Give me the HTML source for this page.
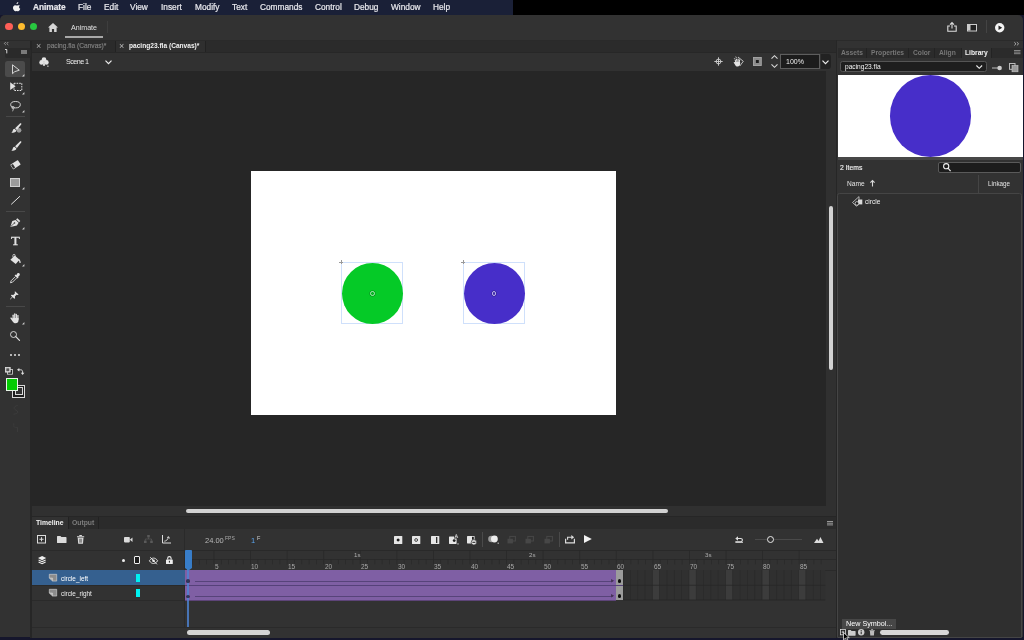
<!DOCTYPE html>
<html><head><meta charset="utf-8"><title>Animate</title>
<style>
*{box-sizing:border-box;margin:0;padding:0}
html,body{width:1024px;height:640px;overflow:hidden;background:#15162c;font-family:"Liberation Sans",sans-serif;color:#ddd}
.a{position:absolute}
.t,.m,.r{will-change:transform}
.t{position:absolute;white-space:nowrap;line-height:10px;font-size:7.5px;color:#d8d8d8}
.m{position:absolute;white-space:nowrap;line-height:14px;top:0;font-size:8.3px;color:#e9e9ee;-webkit-text-stroke:.2px #e9e9ee}
svg{position:absolute;overflow:visible}
.b{font-weight:700}
.r{position:absolute;white-space:nowrap;line-height:8px;font-size:6.5px;color:#a8a8a8}
</style></head><body>
<div class="a" style="left:0px;top:0px;width:1024px;height:15px;background:#000;"></div>
<div class="a" style="left:0px;top:0px;width:513px;height:15px;background:#1a2037;"></div>
<svg style="left:12px;top:2px" width="9" height="10" viewBox="0 0 18 20"><path fill="#f2f2f2" d="M12.6 0c.1 1.100-.3 2.100-1 2.900-.7.800-1.700 1.400-2.700 1.300-.100-1 .4-2.100 1-2.800C10.600.6 11.700.1 12.600 0zM16 6.800c-1.200.700-1.900 1.900-1.900 3.300 0 1.600.9 3 2.400 3.600-.3.900-.700 1.700-1.200 2.500-.800 1.100-1.600 2.300-2.800 2.300s-1.600-.700-3-.700-1.900.700-3 .800c-1.200 0-2.100-1.200-2.900-2.400C2 13.900 1.300 10.500 2.900 8.400c.800-1.300 2.200-2.100 3.600-2.100 1.300 0 2.300.8 3 .8.700 0 2-.9 3.500-.8 1.200 0 2.300.6 3 1.500z"/></svg>
<div class="m b" style="left:33px">Animate</div>
<div class="m" style="left:78px">File</div>
<div class="m" style="left:103.5px">Edit</div>
<div class="m" style="left:130px">View</div>
<div class="m" style="left:160.5px">Insert</div>
<div class="m" style="left:194.5px">Modify</div>
<div class="m" style="left:232px">Text</div>
<div class="m" style="left:260px">Commands</div>
<div class="m" style="left:314.5px">Control</div>
<div class="m" style="left:354px">Debug</div>
<div class="m" style="left:390.5px">Window</div>
<div class="m" style="left:432.5px">Help</div>
<div class="a" style="left:0px;top:14.7px;width:1022.7px;height:622.8px;background:#323232;border-radius:5px 5px 0 0"></div>
<div class="a" style="left:5.3999999999999995px;top:22.5px;width:7.6px;height:7.6px;background:#fe5f57;border-radius:50%"></div>
<div class="a" style="left:17.599999999999998px;top:22.5px;width:7.6px;height:7.6px;background:#febc2e;border-radius:50%"></div>
<div class="a" style="left:29.8px;top:22.5px;width:7.6px;height:7.6px;background:#28c840;border-radius:50%"></div>
<svg style="left:48px;top:23px" width="10" height="9" viewBox="0 0 20 18"><path fill="#d6d6d6" d="M10 0L0 9h2.800v9h5v-6h4.400v6h5V9H20z"/></svg>
<div class="t" style="left:71.2px;top:22.9px;font-size:7.1px;color:#e0e0e0">Animate</div>
<div class="a" style="left:65px;top:36.3px;width:38px;height:1.5px;background:#a8a8a8;"></div>
<div class="a" style="left:107px;top:21px;width:1px;height:12px;background:#3e3e3e;"></div>
<svg style="left:947px;top:22px" width="10" height="10" viewBox="0 0 10 10"><path fill="none" stroke="#ddd" stroke-width="1.100" d="M3 4H.8v5.300h8.400V4H7M5 6.500V.8M3 2.600l2-2 2 2"/></svg>
<svg style="left:967px;top:24px" width="10" height="8" viewBox="0 0 10 8"><rect x=".5" y=".5" width="9" height="6.500" fill="#222" stroke="#ccc" stroke-width="1"/><rect x="1" y="1" width="2.500" height="5.500" fill="#ccc"/></svg>
<div class="a" style="left:985.5px;top:19.5px;width:1px;height:13.5px;background:#444;"></div>
<svg style="left:995px;top:22.600px" width="9.400" height="9.400" viewBox="0 0 10 10"><circle cx="5" cy="5" r="5" fill="#f4f4f4"/><path d="M3.700 2.600v4.800L7.600 5z" fill="#222"/></svg>
<div class="a" style="left:31.5px;top:40px;width:805px;height:12.5px;background:#2b2b2b;"></div>
<div class="a" style="left:115px;top:40px;width:90px;height:12.5px;background:#2f2f2f;"></div>
<div class="a" style="left:115px;top:40px;width:0.7px;height:12.5px;background:#222;"></div>
<div class="a" style="left:205px;top:40px;width:0.7px;height:12.5px;background:#222;"></div>
<div class="t" style="left:35.5px;top:41.3px;font-size:9px;color:#aaa">×</div>
<div class="t" style="left:46.5px;top:41.1px;font-size:6.6px;color:#808080;-webkit-text-stroke:.15px #808080">pacing.fla (Canvas)*</div>
<div class="t" style="left:119px;top:41.3px;font-size:9px;color:#bbb">×</div>
<div class="t" style="left:129.2px;top:41.1px;font-size:6.6px;color:#f2f2f2;font-weight:700">pacing23.fla (Canvas)*</div>
<div class="a" style="left:31.5px;top:52.5px;width:805px;height:18px;background:#313131;"></div>
<div class="a" style="left:31.5px;top:70.5px;width:794.5px;height:435.5px;background:#262626;"></div>
<div class="a" style="left:825.8px;top:70.5px;width:10px;height:446px;background:#303030;"></div>
<div class="a" style="left:31.5px;top:505.7px;width:805px;height:10.5px;background:#303030;"></div>
<div class="a" style="left:250.5px;top:171.3px;width:365.7px;height:243.7px;background:#fff;"></div>
<svg style="left:38.900px;top:56.600px" width="10" height="10" viewBox="0 0 10 10"><g fill="#e4e4e4"><circle cx="5" cy="2.600" r="2.300"/><circle cx="2.600" cy="5.400" r="2.300"/><circle cx="7.400" cy="5.400" r="2.300"/><path d="M4.500 5h1l.6 3.800H3.900z"/><rect x="8.300" y="8.600" width="1.200" height="1.200"/></g></svg>
<div class="t" style="left:66px;top:56.5px;font-size:7.2px;color:#eee;letter-spacing:-.55px">Scene 1</div>
<svg style="left:105px;top:59.500px" width="7" height="4.500" viewBox="0 0 7 4.500"><path d="M.5.600l3 3 3-3" fill="none" stroke="#eee" stroke-width="1.200"/></svg>
<svg style="left:714px;top:57px" width="9" height="9" viewBox="0 0 9 9"><g fill="none" stroke="#d0d0d0" stroke-width=".9"><circle cx="4.500" cy="4.500" r="2.400"/><path d="M4.500 .3v8.400M.3 4.500h8.400"/></g></svg>
<svg style="left:732.500px;top:56px" width="11" height="11" viewBox="0 0 11 11"><path d="M5 1l5.300 4.300L6.800 10" fill="none" stroke="#cfcfcf" stroke-width=".9"/><path d="M2.200.8l2 .9M.9 2.500l1.500.3" stroke="#cfcfcf" stroke-width=".7"/><g fill="#e2e2e2"><rect x="2.100" y="3.500" width="1.100" height="4" rx=".55" transform="rotate(-18 2.600 5.500)"/><rect x="3.300" y="2.600" width="1.100" height="4.500" rx=".55" transform="rotate(-10 3.800 5)"/><rect x="4.600" y="2.500" width="1.100" height="4.500" rx=".55"/><rect x="5.900" y="3.200" width="1.100" height="4" rx=".55" transform="rotate(10 6.400 5)"/><path d="M2.300 6h4.800v2c0 1.500-1 2.500-2.500 2.500-1.100 0-1.900-.5-2.400-1.500L.8 6.800c-.4-.7.500-1.300 1-.6z"/></g></svg>
<svg style="left:753.300px;top:57px" width="8.700" height="9" viewBox="0 0 8.700 9"><rect x="0" y="0" width="8.700" height="9" rx=".5" fill="#8c8c8c"/><rect x=".5" y=".5" width="7.700" height="8" fill="none" stroke="#a6a6a6" stroke-width=".8"/><rect x="2.900" y="3" width="2.900" height="3" fill="#1e1e1e"/></svg>
<svg style="left:771.300px;top:55px" width="7" height="13" viewBox="0 0 7 13"><path d="M.5 3.700l3-3 3 3M.5 9.300l3 3 3-3" fill="none" stroke="#d8d8d8" stroke-width="1.100"/></svg>
<div class="a" style="left:780.2px;top:54.3px;width:40.3px;height:14.3px;background:#1c1c1c;border:1px solid #5e5e5e"></div>
<div class="t" style="left:786px;top:57px;font-size:7px;color:#eee">100%</div>
<div class="a" style="left:820.5px;top:54px;width:10.5px;height:15px;background:#222;border-radius:0 3px 3px 0"></div>
<svg style="left:822px;top:59.500px" width="7" height="4.500" viewBox="0 0 7 4.500"><path d="M.5.600l3 3 3-3" fill="none" stroke="#eee" stroke-width="1.200"/></svg>
<div class="a" style="left:341.2px;top:262.04999999999995px;width:62px;height:62px;background:transparent;border:1px solid #cfe0fb"></div>
<div class="a" style="left:341.7px;top:262.54999999999995px;width:61.2px;height:61.2px;background:#05ca27;border-radius:50%"></div>
<div class="a" style="left:369.90000000000003px;top:290.75px;width:4.8px;height:4.8px;background:transparent;border-radius:50%;border:.9px solid rgba(255,255,255,.62);box-shadow:0 0 0 .5px rgba(0,0,0,.35),inset 0 0 0 .5px rgba(0,0,0,.3)"></div>
<div class="a" style="left:339.2px;top:262.24999999999994px;width:4px;height:0.6px;background:#999;"></div>
<div class="a" style="left:340.9px;top:260.04999999999995px;width:0.6px;height:4px;background:#999;"></div>
<div class="a" style="left:463.0px;top:262.04999999999995px;width:62px;height:62px;background:transparent;border:1px solid #cfe0fb"></div>
<div class="a" style="left:463.5px;top:262.54999999999995px;width:61.2px;height:61.2px;background:#472ec9;border-radius:50%"></div>
<div class="a" style="left:491.70000000000005px;top:290.75px;width:4.8px;height:4.8px;background:transparent;border-radius:50%;border:.9px solid rgba(255,255,255,.62);box-shadow:0 0 0 .5px rgba(0,0,0,.35),inset 0 0 0 .5px rgba(0,0,0,.3)"></div>
<div class="a" style="left:461.0px;top:262.24999999999994px;width:4px;height:0.6px;background:#999;"></div>
<div class="a" style="left:462.7px;top:260.04999999999995px;width:0.6px;height:4px;background:#999;"></div>
<div class="a" style="left:829.4px;top:205.6px;width:3.7px;height:164px;background:#d2d2d2;border-radius:2px"></div>
<div class="a" style="left:186px;top:509.3px;width:481.8px;height:4.2px;background:#d2d2d2;border-radius:2px"></div>
<div class="a" style="left:30px;top:39.7px;width:1.7px;height:598px;background:#262626;"></div>
<div class="a" style="left:0px;top:39.6px;width:1023px;height:1px;background:#2a2a2a;"></div>
<div class="a" style="left:31.7px;top:51.8px;width:804px;height:0.8px;background:#272727;"></div>
<div class="a" style="left:835.8px;top:40px;width:1.7px;height:598px;background:#262626;"></div>
<div class="a" style="left:31.5px;top:516px;width:804.5px;height:1.4px;background:#262626;"></div>
<div class="a" style="left:31.5px;top:517px;width:804.5px;height:121px;background:#323232;"></div>
<div class="a" style="left:31.5px;top:517.4px;width:804.5px;height:11.3px;background:#2b2b2b;"></div>
<div class="a" style="left:31.5px;top:517.4px;width:37px;height:11.3px;background:#323232;"></div>
<div class="a" style="left:68.4px;top:517.4px;width:0.7px;height:11.3px;background:#222;"></div>
<div class="a" style="left:98.4px;top:517.4px;width:0.7px;height:11.3px;background:#222;"></div>
<div class="t" style="left:36.1px;top:517.7px;font-size:6.800px;font-weight:700;color:#f4f4f4">Timeline</div>
<div class="t" style="left:72px;top:517.7px;font-size:6.800px;font-weight:700;color:#7c7c7c">Output</div>
<svg style="left:826.800px;top:520.500px" width="6" height="4.500" viewBox="0 0 6 4.500"><path d="M0 .5h6M0 2.200h6M0 3.900h6" stroke="#999" stroke-width="1"/></svg>
<div class="a" style="left:31.5px;top:549.6px;width:804.5px;height:0.7px;background:#2a2a2a;"></div>
<div class="a" style="left:184.2px;top:529px;width:0.7px;height:98px;background:#2a2a2a;"></div>
<svg style="left:37.200px;top:535px" width="9" height="8.500" viewBox="0 0 9 8.500"><rect x=".5" y=".5" width="8" height="7.500" fill="none" stroke="#dcdcdc" stroke-width="1"/><path d="M4.500 2.200v4.100M2.400 4.250h4.200" stroke="#dcdcdc" stroke-width="1"/></svg>
<svg style="left:57px;top:535.800px" width="9.500" height="7" viewBox="0 0 9.500 7"><path d="M0 .6C0 .3.300 0 .6 0h2.800l1 1.100h4.500c.3 0 .6.300.6.600V6.400c0 .3-.3.600-.6.600H.6C.3 7 0 6.700 0 6.400z" fill="#dcdcdc"/></svg>
<svg style="left:77.200px;top:534.800px" width="7.200" height="8.700" viewBox="0 0 7.200 8.700"><path d="M0 1.200h7.200v1H0zM2.300 0h2.600v1H2.300zM.7 2.700h5.800L6 8.700H1.200z" fill="#dcdcdc"/><path d="M2.600 3.700v4M3.600 3.700v4M4.600 3.700v4" stroke="#323232" stroke-width=".5"/></svg>
<svg style="left:124px;top:536.800px" width="8.500" height="5.400" viewBox="0 0 8.500 5.400"><rect x="0" y="0" width="5.800" height="5.400" rx=".8" fill="#dcdcdc"/><path d="M5.800 2.700L8.500.5v4.400z" fill="#dcdcdc"/></svg>
<svg style="left:143.600px;top:535px" width="9" height="8.500" viewBox="0 0 9 8.500"><g fill="#5a5a5a"><rect x="3.200" y="0" width="2.600" height="2.400"/><rect x="0" y="5.600" width="2.600" height="2.400"/><rect x="6.200" y="5.600" width="2.600" height="2.400"/><path d="M4.500 2.400v1.600M1.300 5.600V4h6.200v1.600" stroke="#5a5a5a" fill="none" stroke-width=".7"/></g></svg>
<svg style="left:162.400px;top:535px" width="9" height="8.500" viewBox="0 0 9 8.500"><path d="M.5 0v8h8.500" fill="none" stroke="#dcdcdc" stroke-width="1"/><path d="M2.300 6.200C4.500 6 5.800 4.500 6.500 2.200M5 2.600l1.700-.9.700 1.800" fill="none" stroke="#dcdcdc" stroke-width=".9"/></svg>
<div class="t" style="left:205.4px;top:536.2px;font-size:7.5px;color:#b8b8b8">24.00</div>
<div class="t" style="left:225.2px;top:533px;font-size:5px;color:#aaa">FPS</div>
<div class="t" style="left:250.5px;top:536.2px;font-size:7.5px;color:#5aa4ee">1</div>
<div class="t" style="left:256.8px;top:533px;font-size:5.5px;color:#ccc">F</div>
<svg style="left:394px;top:535.600px" width="8.300" height="8" viewBox="0 0 8.300 8"><rect x="0" y="0" width="8.300" height="8" rx=".6" fill="#e6e6e6"/><circle cx="4.150" cy="4" r="1.500" fill="#1c1c1c"/></svg>
<svg style="left:412px;top:535.600px" width="8.300" height="8" viewBox="0 0 8.300 8"><rect x="0" y="0" width="8.300" height="8" rx=".6" fill="#e6e6e6"/><circle cx="4.150" cy="4" r="1.400" fill="none" stroke="#1c1c1c" stroke-width=".8"/></svg>
<svg style="left:430.8px;top:535.600px" width="8.300" height="8" viewBox="0 0 8.300 8"><rect x="0" y="0" width="8.300" height="8" rx=".6" fill="#e6e6e6"/><rect x="5.100" y="1" width="1.200" height="6" fill="#1c1c1c"/></svg>
<svg style="left:449px;top:533.500px" width="10" height="10.500" viewBox="0 0 10 10.500"><rect x="0" y="2.500" width="7.600" height="7.400" rx=".6" fill="#e6e6e6"/><circle cx="5.200" cy="6.600" r="1.400" fill="#1c1c1c"/><rect x="5" y="0" width="4.500" height="4.500" fill="#323232"/><path d="M5.800 4l1.500-3.600L8.800 4M6.300 2.800h2" stroke="#e6e6e6" stroke-width=".7" fill="none"/><rect x="8.400" y="9.300" width="1.200" height="1.200" fill="#ccc"/></svg>
<svg style="left:467.200px;top:535.600px" width="10" height="9" viewBox="0 0 10 9"><rect x="0" y="0" width="7.600" height="7.400" rx=".6" fill="#e6e6e6"/><rect x="5" y=".8" width="1.800" height="3" fill="#1c1c1c"/><circle cx="6.900" cy="6.300" r="2.700" fill="#e6e6e6" stroke="#323232" stroke-width=".7"/><path d="M5.400 6.300h3" stroke="#1c1c1c" stroke-width="1"/></svg>
<div class="a" style="left:482.2px;top:532px;width:0.8px;height:14.5px;background:#4a4a4a;"></div>
<svg style="left:487.800px;top:535px" width="11" height="9" viewBox="0 0 11 9"><circle cx="3.400" cy="4" r="3.200" fill="#9a9a9a"/><circle cx="6.400" cy="4" r="3.400" fill="#ececec"/><rect x="9.600" y="7.600" width="1.200" height="1.200" fill="#ccc"/></svg>
<svg style="left:507px;top:535.600px" width="9" height="8" viewBox="0 0 9 8"><rect x="2.800" y=".4" width="5.600" height="4.600" fill="none" stroke="#474747" stroke-width="1"/><rect x=".5" y="2.800" width="5.400" height="4.600" fill="#474747"/></svg>
<svg style="left:525px;top:535.600px" width="9" height="8" viewBox="0 0 9 8"><rect x="2.800" y=".4" width="5.600" height="4.600" fill="none" stroke="#474747" stroke-width="1"/><rect x=".5" y="2.800" width="5.400" height="4.600" fill="#474747"/></svg>
<svg style="left:544px;top:535.600px" width="9" height="8" viewBox="0 0 9 8"><rect x="2.800" y=".4" width="5.600" height="4.600" fill="none" stroke="#474747" stroke-width="1"/><rect x=".5" y="2.800" width="5.400" height="4.600" fill="#474747"/></svg>
<div class="a" style="left:558.6px;top:532px;width:0.8px;height:14.5px;background:#4a4a4a;"></div>
<svg style="left:565px;top:535px" width="10" height="8.500" viewBox="0 0 10 8.500"><path d="M.6 3.800v4h8.800v-4" fill="none" stroke="#dcdcdc" stroke-width="1.200"/><path d="M2.600 4.800V2.300h4.200" fill="none" stroke="#dcdcdc" stroke-width="1.100"/><path d="M6.300 0l2.800 2.300-2.800 2.300z" fill="#dcdcdc"/></svg>
<svg style="left:584.400px;top:535.300px" width="7.800" height="8" viewBox="0 0 7.800 8"><path d="M0 0l7.800 4L0 8z" fill="#f2f2f2"/></svg>
<svg style="left:735.300px;top:536.300px" width="8.500" height="6.800" viewBox="0 0 8.500 6.800"><path d="M2.400 2.500h3.400a1.600 1.600 0 010 3.200H.4" fill="none" stroke="#dcdcdc" stroke-width="1.100"/><path d="M3 .2L.3 2.500 3 4.800z" fill="#dcdcdc"/><path d="M.4 6.300h7.600" stroke="#dcdcdc" stroke-width="1"/></svg>
<div class="a" style="left:755.4px;top:539.3px;width:47px;height:0.7px;background:#4a4a4a;"></div>
<div class="a" style="left:767.3px;top:536.0px;width:7.2px;height:7.2px;background:#323232;border-radius:50%;border:1.200px solid #e8e8e8"></div>
<svg style="left:814px;top:537px" width="9.500" height="6" viewBox="0 0 9.500 6"><path d="M0 6L3 1.800 4.600 4 6.400 0l3.100 6z" fill="#dcdcdc"/></svg>
<svg style="left:38.200px;top:556.300px" width="8.200" height="8.600" viewBox="0 0 8.200 8.600"><path d="M4.100 0l4.100 2.100-4.100 2.100L0 2.100z" fill="#eee"/><path d="M.6 3.900l3.500 1.800 3.500-1.800M.6 5.900l3.500 1.800 3.500-1.800" fill="none" stroke="#eee" stroke-width="1.100"/></svg>
<div class="a" style="left:122px;top:558.7px;width:3px;height:3px;background:#eee;border-radius:50%"></div>
<div class="a" style="left:134.4px;top:556.3px;width:5.8px;height:8px;background:#1e1e1e;border:1.200px solid #eee;border-radius:1px"></div>
<svg style="left:148.600px;top:556.500px" width="9" height="7.600" viewBox="0 0 9 7.600"><path d="M.4 3.800C1.600 1.900 3 1.100 4.500 1.100s2.900.8 4.100 2.700C7.400 5.700 6 6.500 4.500 6.500S1.600 5.700.4 3.800z" fill="none" stroke="#eee" stroke-width=".9"/><circle cx="4.500" cy="3.800" r="1.300" fill="#eee"/><path d="M1.300.3l6.600 7" stroke="#eee" stroke-width="1"/></svg>
<svg style="left:165.500px;top:556.300px" width="6.800" height="8" viewBox="0 0 6.800 8"><path d="M1.700 3.600V2.300a1.700 1.700 0 013.400 0v1.300" fill="none" stroke="#eee" stroke-width="1.100"/><rect x="0" y="3.400" width="6.800" height="4.600" rx=".6" fill="#eee"/><rect x="2.900" y="4.800" width="1" height="1.800" fill="#222"/></svg>
<div class="a" style="left:31.5px;top:570.2px;width:153px;height:0.6px;background:#2a2a2a;"></div>
<div class="a" style="left:31.5px;top:570.2px;width:153.3px;height:14.8px;background:#35608f;"></div>
<div class="a" style="left:31.5px;top:585px;width:153px;height:0.5px;background:#2a2a2a;"></div>
<div class="a" style="left:31.5px;top:599.8px;width:153px;height:0.6px;background:#2a2a2a;"></div>
<svg style="left:49.3px;top:574.4px" width="8" height="7.400" viewBox="0 0 8 7.400"><path d="M.3.300h7.400v6.800H3.600L.3 4z" fill="#8c8c8c" stroke="#d8d8d8" stroke-width=".6"/><path d="M.3 4h3.300v3.100" fill="#bbb" stroke="#d8d8d8" stroke-width=".5"/></svg>
<svg style="left:49.3px;top:589.4px" width="8" height="7.400" viewBox="0 0 8 7.400"><path d="M.3.300h7.400v6.800H3.600L.3 4z" fill="#8c8c8c" stroke="#d8d8d8" stroke-width=".6"/><path d="M.3 4h3.300v3.100" fill="#bbb" stroke="#d8d8d8" stroke-width=".5"/></svg>
<div class="t" style="left:60.8px;top:573.7px;font-size:6.400px;color:#fff">circle_left</div>
<div class="t" style="left:60.8px;top:588.7px;font-size:6.400px;color:#eee">circle_right</div>
<div class="a" style="left:135.6px;top:574.4px;width:4.5px;height:7.2px;background:#00f2f2;"></div>
<div class="a" style="left:135.6px;top:589.3px;width:4.5px;height:7.3px;background:#00f2f2;"></div>
<div class="a" style="left:184.9px;top:549.7px;width:651px;height:0.8px;background:#292929;"></div>
<div class="a" style="left:191.5px;top:559px;width:644.3px;height:0.7px;background:#2a2a2a;"></div>
<div class="a" style="left:623.45px;top:569.8px;width:212.54999999999995px;height:0.7px;background:#2a2a2a;"></div>
<svg style="left:184.900px;top:550px" width="641" height="20" viewBox="0 0 641 20"><rect x="6.67" y="9.700" width=".7" height="4.600" fill="#292929"/><rect x="13.98" y="9.700" width=".7" height="4.600" fill="#292929"/><rect x="21.29" y="9.700" width=".7" height="4.600" fill="#292929"/><rect x="28.56" y=".5" width=".8" height="13.800" fill="#292929"/><rect x="35.92" y="9.700" width=".7" height="4.600" fill="#292929"/><rect x="43.24" y="9.700" width=".7" height="4.600" fill="#292929"/><rect x="50.56" y="9.700" width=".7" height="4.600" fill="#292929"/><rect x="57.87" y="9.700" width=".7" height="4.600" fill="#292929"/><rect x="65.14" y=".5" width=".8" height="13.800" fill="#292929"/><rect x="72.50" y="9.700" width=".7" height="4.600" fill="#292929"/><rect x="79.81" y="9.700" width=".7" height="4.600" fill="#292929"/><rect x="87.13" y="9.700" width=".7" height="4.600" fill="#292929"/><rect x="94.44" y="9.700" width=".7" height="4.600" fill="#292929"/><rect x="101.71" y=".5" width=".8" height="13.800" fill="#292929"/><rect x="109.08" y="9.700" width=".7" height="4.600" fill="#292929"/><rect x="116.39" y="9.700" width=".7" height="4.600" fill="#292929"/><rect x="123.71" y="9.700" width=".7" height="4.600" fill="#292929"/><rect x="131.02" y="9.700" width=".7" height="4.600" fill="#292929"/><rect x="138.29" y=".5" width=".8" height="13.800" fill="#292929"/><rect x="145.65" y="9.700" width=".7" height="4.600" fill="#292929"/><rect x="152.97" y="9.700" width=".7" height="4.600" fill="#292929"/><rect x="160.28" y="9.700" width=".7" height="4.600" fill="#292929"/><rect x="167.59" y="9.700" width=".7" height="4.600" fill="#292929"/><rect x="174.86" y=".5" width=".8" height="13.800" fill="#292929"/><rect x="182.22" y="9.700" width=".7" height="4.600" fill="#292929"/><rect x="189.54" y="9.700" width=".7" height="4.600" fill="#292929"/><rect x="196.86" y="9.700" width=".7" height="4.600" fill="#292929"/><rect x="204.17" y="9.700" width=".7" height="4.600" fill="#292929"/><rect x="211.44" y=".5" width=".8" height="13.800" fill="#292929"/><rect x="218.80" y="9.700" width=".7" height="4.600" fill="#292929"/><rect x="226.12" y="9.700" width=".7" height="4.600" fill="#292929"/><rect x="233.43" y="9.700" width=".7" height="4.600" fill="#292929"/><rect x="240.75" y="9.700" width=".7" height="4.600" fill="#292929"/><rect x="248.01" y=".5" width=".8" height="13.800" fill="#292929"/><rect x="255.38" y="9.700" width=".7" height="4.600" fill="#292929"/><rect x="262.69" y="9.700" width=".7" height="4.600" fill="#292929"/><rect x="270.01" y="9.700" width=".7" height="4.600" fill="#292929"/><rect x="277.32" y="9.700" width=".7" height="4.600" fill="#292929"/><rect x="284.59" y=".5" width=".8" height="13.800" fill="#292929"/><rect x="291.95" y="9.700" width=".7" height="4.600" fill="#292929"/><rect x="299.27" y="9.700" width=".7" height="4.600" fill="#292929"/><rect x="306.58" y="9.700" width=".7" height="4.600" fill="#292929"/><rect x="313.90" y="9.700" width=".7" height="4.600" fill="#292929"/><rect x="321.16" y=".5" width=".8" height="13.800" fill="#292929"/><rect x="328.53" y="9.700" width=".7" height="4.600" fill="#292929"/><rect x="335.84" y="9.700" width=".7" height="4.600" fill="#292929"/><rect x="343.16" y="9.700" width=".7" height="4.600" fill="#292929"/><rect x="350.47" y="9.700" width=".7" height="4.600" fill="#292929"/><rect x="357.74" y=".5" width=".8" height="13.800" fill="#292929"/><rect x="365.10" y="9.700" width=".7" height="4.600" fill="#292929"/><rect x="372.42" y="9.700" width=".7" height="4.600" fill="#292929"/><rect x="379.73" y="9.700" width=".7" height="4.600" fill="#292929"/><rect x="387.05" y="9.700" width=".7" height="4.600" fill="#292929"/><rect x="394.31" y=".5" width=".8" height="13.800" fill="#292929"/><rect x="401.68" y="9.700" width=".7" height="4.600" fill="#292929"/><rect x="408.99" y="9.700" width=".7" height="4.600" fill="#292929"/><rect x="416.31" y="9.700" width=".7" height="4.600" fill="#292929"/><rect x="423.62" y="9.700" width=".7" height="4.600" fill="#292929"/><rect x="430.88" y=".5" width=".8" height="13.800" fill="#292929"/><rect x="438.25" y="9.700" width=".7" height="4.600" fill="#292929"/><rect x="445.57" y="9.700" width=".7" height="4.600" fill="#292929"/><rect x="452.88" y="9.700" width=".7" height="4.600" fill="#292929"/><rect x="460.19" y="9.700" width=".7" height="4.600" fill="#292929"/><rect x="467.46" y=".5" width=".8" height="13.800" fill="#292929"/><rect x="474.83" y="9.700" width=".7" height="4.600" fill="#292929"/><rect x="482.14" y="9.700" width=".7" height="4.600" fill="#292929"/><rect x="489.45" y="9.700" width=".7" height="4.600" fill="#292929"/><rect x="496.77" y="9.700" width=".7" height="4.600" fill="#292929"/><rect x="504.04" y=".5" width=".8" height="13.800" fill="#292929"/><rect x="511.40" y="9.700" width=".7" height="4.600" fill="#292929"/><rect x="518.72" y="9.700" width=".7" height="4.600" fill="#292929"/><rect x="526.03" y="9.700" width=".7" height="4.600" fill="#292929"/><rect x="533.35" y="9.700" width=".7" height="4.600" fill="#292929"/><rect x="540.61" y=".5" width=".8" height="13.800" fill="#292929"/><rect x="547.98" y="9.700" width=".7" height="4.600" fill="#292929"/><rect x="555.29" y="9.700" width=".7" height="4.600" fill="#292929"/><rect x="562.61" y="9.700" width=".7" height="4.600" fill="#292929"/><rect x="569.92" y="9.700" width=".7" height="4.600" fill="#292929"/><rect x="577.18" y=".5" width=".8" height="13.800" fill="#292929"/><rect x="584.55" y="9.700" width=".7" height="4.600" fill="#292929"/><rect x="591.87" y="9.700" width=".7" height="4.600" fill="#292929"/><rect x="599.18" y="9.700" width=".7" height="4.600" fill="#292929"/><rect x="606.50" y="9.700" width=".7" height="4.600" fill="#292929"/><rect x="613.76" y=".5" width=".8" height="13.800" fill="#292929"/><rect x="621.13" y="9.700" width=".7" height="4.600" fill="#292929"/><rect x="628.44" y="9.700" width=".7" height="4.600" fill="#292929"/><rect x="635.76" y="9.700" width=".7" height="4.600" fill="#292929"/></svg>
<div class="r" style="left:214.8px;top:562.6px;">5</div>
<div class="r" style="left:251.4px;top:562.6px;">10</div>
<div class="r" style="left:288.0px;top:562.6px;">15</div>
<div class="r" style="left:324.5px;top:562.6px;">20</div>
<div class="r" style="left:361.1px;top:562.6px;">25</div>
<div class="r" style="left:397.7px;top:562.6px;">30</div>
<div class="r" style="left:434.3px;top:562.6px;">35</div>
<div class="r" style="left:470.8px;top:562.6px;">40</div>
<div class="r" style="left:507.4px;top:562.6px;">45</div>
<div class="r" style="left:544.0px;top:562.6px;">50</div>
<div class="r" style="left:580.6px;top:562.6px;">55</div>
<div class="r" style="left:617.1px;top:562.6px;">60</div>
<div class="r" style="left:653.7px;top:562.6px;">65</div>
<div class="r" style="left:690.3px;top:562.6px;">70</div>
<div class="r" style="left:726.9px;top:562.6px;">75</div>
<div class="r" style="left:763.4px;top:562.6px;">80</div>
<div class="r" style="left:800.0px;top:562.6px;">85</div>
<div class="r" style="left:353.6px;top:551.2px;font-size:6.200px;color:#b0b0b0">1s</div>
<div class="r" style="left:529.2px;top:551.2px;font-size:6.200px;color:#b0b0b0">2s</div>
<div class="r" style="left:704.7px;top:551.2px;font-size:6.200px;color:#b0b0b0">3s</div>
<svg style="left:623.45px;top:570.200px" width="202.3" height="30.300" viewBox="0 0 202.3 30.300"><rect width="202.3" height="30.300" fill="#303030"/><rect x="-0.30" y="0" width=".7" height="30" fill="#2a2a2a"/><rect x="7.02" y="0" width=".7" height="30" fill="#2a2a2a"/><rect x="14.33" y="0" width=".7" height="30" fill="#2a2a2a"/><rect x="21.64" y="0" width=".7" height="30" fill="#2a2a2a"/><rect x="29.26" y="0" width="7.315" height="30" fill="#3c3c3c"/><rect x="28.96" y="0" width=".7" height="30" fill="#2a2a2a"/><rect x="36.28" y="0" width=".7" height="30" fill="#2a2a2a"/><rect x="43.59" y="0" width=".7" height="30" fill="#2a2a2a"/><rect x="50.90" y="0" width=".7" height="30" fill="#2a2a2a"/><rect x="58.22" y="0" width=".7" height="30" fill="#2a2a2a"/><rect x="65.84" y="0" width="7.315" height="30" fill="#3c3c3c"/><rect x="65.54" y="0" width=".7" height="30" fill="#2a2a2a"/><rect x="72.85" y="0" width=".7" height="30" fill="#2a2a2a"/><rect x="80.16" y="0" width=".7" height="30" fill="#2a2a2a"/><rect x="87.48" y="0" width=".7" height="30" fill="#2a2a2a"/><rect x="94.80" y="0" width=".7" height="30" fill="#2a2a2a"/><rect x="102.41" y="0" width="7.315" height="30" fill="#3c3c3c"/><rect x="102.11" y="0" width=".7" height="30" fill="#2a2a2a"/><rect x="109.42" y="0" width=".7" height="30" fill="#2a2a2a"/><rect x="116.74" y="0" width=".7" height="30" fill="#2a2a2a"/><rect x="124.06" y="0" width=".7" height="30" fill="#2a2a2a"/><rect x="131.37" y="0" width=".7" height="30" fill="#2a2a2a"/><rect x="138.98" y="0" width="7.315" height="30" fill="#3c3c3c"/><rect x="138.68" y="0" width=".7" height="30" fill="#2a2a2a"/><rect x="146.00" y="0" width=".7" height="30" fill="#2a2a2a"/><rect x="153.31" y="0" width=".7" height="30" fill="#2a2a2a"/><rect x="160.63" y="0" width=".7" height="30" fill="#2a2a2a"/><rect x="167.94" y="0" width=".7" height="30" fill="#2a2a2a"/><rect x="175.56" y="0" width="7.315" height="30" fill="#3c3c3c"/><rect x="175.26" y="0" width=".7" height="30" fill="#2a2a2a"/><rect x="182.57" y="0" width=".7" height="30" fill="#2a2a2a"/><rect x="189.89" y="0" width=".7" height="30" fill="#2a2a2a"/><rect x="197.21" y="0" width=".7" height="30" fill="#2a2a2a"/><rect y="14.800" width="202.3" height=".8" fill="#272727"/><rect y="29.600" width="202.3" height=".7" fill="#272727"/></svg>
<div class="a" style="left:184.7px;top:570.2px;width:431.435px;height:30.1px;background:#7f5fa4;"></div>
<div class="a" style="left:184.7px;top:584.9px;width:438.435px;height:0.9px;background:#56417a;"></div>
<div class="a" style="left:184.7px;top:599.7px;width:431.435px;height:0.6px;background:#5d4478;"></div>
<div class="a" style="left:194.5px;top:580.6px;width:418.635px;height:0.8px;background:#57437a;"></div>
<svg style="left:611.34px;top:579.3px" width="3.200" height="3.400" viewBox="0 0 3.200 3.400"><path d="M0 0l3.200 1.700L0 3.400z" fill="#463358"/></svg>
<div class="a" style="left:616.135px;top:570.2px;width:6.9px;height:14.6px;background:#9c9c9c;"></div>
<div class="a" style="left:617.885px;top:579.3px;width:3.4px;height:3.4px;background:#0c0c0c;border-radius:50%"></div>
<div class="a" style="left:194.5px;top:595.7px;width:418.635px;height:0.8px;background:#57437a;"></div>
<svg style="left:611.34px;top:594.4px" width="3.200" height="3.400" viewBox="0 0 3.200 3.400"><path d="M0 0l3.200 1.700L0 3.400z" fill="#463358"/></svg>
<div class="a" style="left:616.135px;top:585.8px;width:6.9px;height:14.5px;background:#9c9c9c;"></div>
<div class="a" style="left:617.885px;top:594.4px;width:3.4px;height:3.4px;background:#0c0c0c;border-radius:50%"></div>
<div class="a" style="left:31.5px;top:627px;width:804.5px;height:0.7px;background:#2a2a2a;"></div>
<div class="a" style="left:187.2px;top:630.2px;width:82.5px;height:5.2px;background:#d4d4d4;border-radius:2.600px"></div>
<div class="a" style="left:187.2px;top:568px;width:1.6px;height:59px;background:rgba(78,132,214,.8);"></div>
<svg style="left:184.700px;top:550.200px" width="7" height="20.400" viewBox="0 0 7 20.400"><path d="M.8 0h5.400c.5 0 .8.300.8.800V18L3.500 20.400 0 18V.8C0 .3.300 0 .8 0z" fill="#387dc8"/></svg>
<div class="a" style="left:186.1px;top:579.4px;width:4.1px;height:3.2px;background:rgba(36,34,58,.78);border-radius:50%"></div>
<div class="a" style="left:186.1px;top:594.5px;width:4.1px;height:3.2px;background:rgba(36,34,58,.78);border-radius:50%"></div>
<svg style="left:1014.200px;top:41.800px" width="5" height="3.600" viewBox="0 0 5 3.600"><path d="M.3.200l1.700 1.600L.3 3.400M2.900.2l1.700 1.600-1.700 1.600" fill="none" stroke="#c4c4c4" stroke-width=".8"/></svg>
<div class="a" style="left:837.5px;top:47.6px;width:185px;height:10px;background:#2b2b2b;"></div>
<div class="a" style="left:961px;top:47.6px;width:30.5px;height:10px;background:#323232;"></div>
<div class="a" style="left:866.2px;top:47.6px;width:0.7px;height:10px;background:#232323;"></div>
<div class="a" style="left:907.8px;top:47.6px;width:0.7px;height:10px;background:#232323;"></div>
<div class="a" style="left:934.3px;top:47.6px;width:0.7px;height:10px;background:#232323;"></div>
<div class="a" style="left:960.6px;top:47.6px;width:0.7px;height:10px;background:#232323;"></div>
<div class="a" style="left:991.3px;top:47.6px;width:0.7px;height:10px;background:#232323;"></div>
<div class="t" style="left:841.4px;top:48.4px;font-size:6.700px;font-weight:700;color:#777">Assets</div>
<div class="t" style="left:871.3px;top:48.4px;font-size:6.700px;font-weight:700;color:#777">Properties</div>
<div class="t" style="left:912.6px;top:48.4px;font-size:6.700px;font-weight:700;color:#777">Color</div>
<div class="t" style="left:939.3px;top:48.4px;font-size:6.700px;font-weight:700;color:#777">Align</div>
<div class="t" style="left:964.7px;top:48.4px;font-size:6.700px;font-weight:700;color:#f4f4f4">Library</div>
<svg style="left:1013.500px;top:50.200px" width="6.500" height="4.200" viewBox="0 0 6.500 4.200"><path d="M0 .5h6.500M0 2.100h6.500M0 3.700h6.500" stroke="#8a8a8a" stroke-width="1"/></svg>
<div class="a" style="left:840.3px;top:61.1px;width:147px;height:11.3px;background:#1e1e1e;border:1px solid #555;border-radius:2.500px"></div>
<div class="t" style="left:845.2px;top:62.2px;font-size:6.600px;color:#f4f4f4">pacing23.fla</div>
<svg style="left:976px;top:64.600px" width="6.500" height="4" viewBox="0 0 6.500 4"><path d="M.4.500l2.850 2.800L6.100.5" fill="none" stroke="#eee" stroke-width="1.100"/></svg>
<svg style="left:992px;top:64.500px" width="10" height="6" viewBox="0 0 10 6"><path d="M0 3h6" stroke="#ccc" stroke-width=".9"/><circle cx="7.600" cy="3" r="2.300" fill="#ccc"/></svg>
<svg style="left:1008.500px;top:63px" width="9.500" height="9" viewBox="0 0 9.500 9"><rect x=".5" y=".5" width="5.500" height="5.800" fill="none" stroke="#bbb" stroke-width="1"/><rect x="3" y="2.600" width="6" height="6.200" fill="#9a9a9a" stroke="#ccc" stroke-width=".6"/></svg>
<div class="a" style="left:837.5px;top:75.3px;width:185.2px;height:81.5px;background:#fff;"></div>
<div class="a" style="left:837.5px;top:156.8px;width:185.2px;height:3.2px;background:#474747;"></div>
<div class="a" style="left:889.5px;top:75.35px;width:81.4px;height:81.4px;background:#472ec9;border-radius:50%"></div>
<div class="t" style="left:839.5px;top:163.3px;font-size:6.800px;color:#f0f0f0;-webkit-text-stroke:.15px #f0f0f0">2 Items</div>
<div class="a" style="left:938px;top:161.5px;width:83px;height:11.4px;background:#1c1c1c;border:1px solid #5a5a5a;border-radius:2px"></div>
<svg style="left:943px;top:163px" width="8" height="8.500" viewBox="0 0 8 8.500"><circle cx="3.200" cy="3.200" r="2.600" fill="none" stroke="#eee" stroke-width="1.100"/><path d="M5 5.200l2.600 2.900" stroke="#eee" stroke-width="1.200"/></svg>
<div class="t" style="left:847.2px;top:179.3px;font-size:6.600px;color:#e4e4e4">Name</div>
<svg style="left:869.500px;top:180px" width="5" height="6.500" viewBox="0 0 5 6.500"><path d="M2.500 6.500V.8M.4 2.700L2.500.6l2.100 2.100" fill="none" stroke="#d8d8d8" stroke-width="1.100"/></svg>
<div class="a" style="left:978.4px;top:174.5px;width:0.8px;height:19px;background:#454545;"></div>
<div class="t" style="left:988px;top:179.3px;font-size:6.300px;color:#e4e4e4">Linkage</div>
<div class="a" style="left:837.2px;top:193.4px;width:185px;height:444.2px;background:#2f2f2f;border:.9px solid #454545;border-radius:2.500px 2.500px 0 0"></div>
<svg style="left:851.500px;top:195.500px" width="10.500" height="10.500" viewBox="0 0 10.500 10.500"><path d="M.5 6.500L7 .6v3M.5 6.500l3.800 3.600 2.400-1.600" fill="none" stroke="#cfcfcf" stroke-width=".8"/><rect x="6" y="3.500" width="4.300" height="4.900" fill="#dadada"/><circle cx="4.900" cy="7.400" r="1.800" fill="#1c1c1c" stroke="#e0e0e0" stroke-width=".8"/></svg>
<div class="t" style="left:865.2px;top:196.6px;font-size:6.600px;color:#f0f0f0">circle</div>
<div class="a" style="left:842.3px;top:619px;width:54px;height:9.5px;background:#474747;"></div>
<div class="t" style="left:846px;top:619.3px;font-size:7.200px;color:#fff">New Symbol...</div>
<svg style="left:839.500px;top:629.400px" width="6" height="6.200" viewBox="0 0 6 6.200"><rect x=".4" y=".4" width="5.200" height="5.400" fill="#222" stroke="#ddd" stroke-width=".8"/><path d="M3 1.700v2.800M1.600 3.100h2.800" stroke="#ddd" stroke-width=".8"/></svg>
<svg style="left:848.400px;top:629.700px" width="7.600" height="5.800" viewBox="0 0 9.500 7"><path d="M0 .6C0 .3.300 0 .6 0h2.800l1 1.100h4.500c.3 0 .6.300.6.600V6.400c0 .3-.3.600-.6.600H.6C.3 7 0 6.700 0 6.400z" fill="#ccc"/></svg>
<svg style="left:858.400px;top:629.400px" width="6.400" height="6.400" viewBox="0 0 6.400 6.400"><circle cx="3.200" cy="3.200" r="3.200" fill="#ccc"/><rect x="2.700" y="2.600" width="1" height="2.600" fill="#222"/><rect x="2.700" y="1.100" width="1" height="1" fill="#222"/></svg>
<svg style="left:868.800px;top:629.300px" width="6.200" height="6.600" viewBox="0 0 7.200 8.700"><path d="M0 1.200h7.200v1H0zM2.300 0h2.600v1H2.300zM.7 2.700h5.800L6 8.700H1.200z" fill="#bbb"/></svg>
<div class="a" style="left:879.6px;top:630.3px;width:69.8px;height:4.7px;background:#d8d8d8;border-radius:2.400px"></div>
<svg style="left:842.500px;top:631.500px" width="7" height="9" viewBox="0 0 7 9"><path d="M.5.500v7.400l1.900-1.700 1.300 2.600 1.300-.6-1.300-2.500h2.600z" fill="#000" stroke="#fff" stroke-width=".7"/></svg>
<svg style="left:3.700px;top:42.300px" width="4.600" height="3" viewBox="0 0 4.600 3"><path d="M1.800 0L.3 1.500 1.800 3M4.300 0L2.800 1.500 4.300 3" fill="none" stroke="#bdbdbd" stroke-width=".7"/></svg>
<div class="a" style="left:5px;top:47.5px;width:25.5px;height:10px;background:#2a2a2a;border-radius:2px"></div>
<svg style="left:4.700px;top:49.400px" width="2.400" height="4.400" viewBox="0 0 2.400 4.400"><path d="M0 .5h1.800v3.900" fill="none" stroke="#eee" stroke-width=".9"/></svg>
<div class="a" style="left:20.6px;top:50px;width:6.3px;height:4.4px;background:#7a7a7a;"></div>
<div class="a" style="left:5.25px;top:61.25px;width:19.5px;height:15.7px;background:#4b4b4b;border-radius:2.500px"></div>
<svg style="left:12px;top:64px" width="8" height="10.500" viewBox="0 0 8 10.500"><path d="M.5.800v8.900l2.200-2 4.600-1.500z" fill="none" stroke="#e2e2e2" stroke-width=".9" stroke-linejoin="miter"/></svg>
<svg style="left:21.7px;top:73.8px" width="2.400" height="2.400" viewBox="0 0 2.400 2.400"><path d="M2.400 0v2.400H0z" fill="#cfcfcf"/></svg>
<svg style="left:9.500px;top:82px" width="13" height="10" viewBox="0 0 13 10"><path d="M.2.300v7.800L5.600 4.200z" fill="#e2e2e2"/><rect x="4" y="1.300" width="7.800" height="7.200" fill="none" stroke="#e2e2e2" stroke-width="1" stroke-dasharray="1.600 1"/></svg>
<svg style="left:21.7px;top:92.3px" width="2.400" height="2.400" viewBox="0 0 2.400 2.400"><path d="M2.400 0v2.400H0z" fill="#cfcfcf"/></svg>
<svg style="left:10px;top:101px" width="11" height="10.500" viewBox="0 0 11 10.500"><ellipse cx="5.500" cy="3.700" rx="4.800" ry="3.200" fill="none" stroke="#e2e2e2" stroke-width=".9"/><circle cx="3" cy="6.600" r="1.200" fill="none" stroke="#e2e2e2" stroke-width=".7"/><path d="M3.200 7.800c.3 1-.2 1.900-1 2.500" fill="none" stroke="#e2e2e2" stroke-width=".7"/></svg>
<svg style="left:21.7px;top:110.3px" width="2.400" height="2.400" viewBox="0 0 2.400 2.400"><path d="M2.400 0v2.400H0z" fill="#cfcfcf"/></svg>
<div class="a" style="left:5.6px;top:115.8px;width:19px;height:0.7px;background:#484848;"></div>
<svg style="left:10.500px;top:122.500px" width="11" height="10" viewBox="0 0 11 10"><circle cx="8" cy="7.300" r="2.400" fill="#9a9a9a"/><path d="M9.200.3c.6-.5 1.500.3 1.100 1L5.900 7 4.100 5.300z" fill="#e2e2e2"/><path d="M3.500 5.800l1.900 1.800c-.2 1.700-2.600 2.700-5.200 2 1-.4 1.300-1.100 1.500-1.900.2-1 .9-1.800 1.800-1.900z" fill="#e2e2e2"/></svg>
<svg style="left:10.500px;top:141px" width="11" height="10" viewBox="0 0 11 10"><path d="M9.200.3c.6-.5 1.500.3 1.100 1L5.900 7 4.100 5.300z" fill="#e2e2e2"/><path d="M3.500 5.800l1.900 1.800c-.2 1.700-2.600 2.700-5.200 2 1-.4 1.300-1.100 1.500-1.900.2-1 .9-1.800 1.800-1.900z" fill="#e2e2e2"/></svg>
<svg style="left:10px;top:159.500px" width="11" height="9.500" viewBox="0 0 11 9.500"><g transform="rotate(-33 5.500 4.700)"><rect x="1" y="2" width="9" height="5.400" rx=".5" fill="#e2e2e2"/><rect x="1.500" y="2.600" width="2.200" height="4.200" fill="#323232"/></g></svg>
<div class="a" style="left:10.2px;top:177.7px;width:10.2px;height:9px;background:#9c9c9c;border:1px solid #d0d0d0"></div>
<svg style="left:21.7px;top:187.0px" width="2.400" height="2.400" viewBox="0 0 2.400 2.400"><path d="M2.400 0v2.400H0z" fill="#cfcfcf"/></svg>
<svg style="left:10.600px;top:196.200px" width="9.200" height="8.600" viewBox="0 0 9.200 8.600"><path d="M.2 8.400L9 .2" stroke="#e2e2e2" stroke-width="1"/></svg>
<div class="a" style="left:5.6px;top:211px;width:19px;height:0.7px;background:#484848;"></div>
<svg style="left:10px;top:218.400px" width="10.500" height="9" viewBox="0 0 10.500 9"><path d="M7.300.2l3 2.700-1.200 1.400-3-2.700z" fill="#e2e2e2"/><path d="M5.600 2.100l3 2.700-1.700 2.700L.3 8.900l2-6z" fill="#e2e2e2"/><path d="M.5 8.700l3.600-3.300" stroke="#323232" stroke-width=".7"/><circle cx="4.500" cy="5" r=".8" fill="#323232"/></svg>
<svg style="left:21.7px;top:227.20000000000002px" width="2.400" height="2.400" viewBox="0 0 2.400 2.400"><path d="M2.400 0v2.400H0z" fill="#cfcfcf"/></svg>
<div class="t" style="left:10.600px;top:233.300px;font-family:'Liberation Serif',serif;font-size:13.400px;line-height:15px;color:#e2e2e2;-webkit-text-stroke:.3px #e2e2e2;transform:scaleX(1.08);transform-origin:0 0">T</div>
<svg style="left:9.700px;top:254px" width="11" height="10.200" viewBox="0 0 11 10.200"><path d="M4.700 1.600l4.900 4.200-3.900 4.200L.4 5.800z" fill="#e2e2e2"/><path d="M2.900 3.200V1.500c0-1.600 2.300-1.600 2.300 0v2" fill="none" stroke="#e2e2e2" stroke-width=".8"/><path d="M9.200 5.300c1 .900 1.500 2 1.500 3.200 0 .8-1.300.8-1.300 0 0-1-.3-1.900-.9-2.600z" fill="#e2e2e2"/></svg>
<svg style="left:21.7px;top:263.5px" width="2.400" height="2.400" viewBox="0 0 2.400 2.400"><path d="M2.400 0v2.400H0z" fill="#cfcfcf"/></svg>
<svg style="left:10.200px;top:272.500px" width="10.200" height="10.400" viewBox="0 0 10.200 10.400"><path d="M7.300.5c.8-.8 2.200-.5 2.500.5.200.7 0 1.300-.5 1.700L8 4l.6.600-1 1-3-3 1-1 .6.600z" fill="#e2e2e2"/><path d="M5.300 3.600L1.100 7.800.5 9.800l2-.6 4.200-4.200" fill="none" stroke="#e2e2e2" stroke-width=".9"/></svg>
<svg style="left:10.200px;top:291.200px" width="8.800" height="8.400" viewBox="0 0 8.800 8.400"><path d="M5 .2l3.600 3.400-.8.300-1.300-.2-1.600 1.700.2 1.800-.8.500-3.400-3.300.6-.7 1.800.2 1.700-1.600L4.700.9z" fill="#e2e2e2"/><path d="M2.800 5.600L.3 8.100" stroke="#e2e2e2" stroke-width=".8"/></svg>
<div class="a" style="left:5.6px;top:306.4px;width:19px;height:0.7px;background:#484848;"></div>
<svg style="left:10.200px;top:312.500px" width="10.200" height="10.200" viewBox="0 0 10.200 10.200"><g fill="#e2e2e2"><rect x="2.500" y="1.500" width="1.300" height="5.500" rx=".65"/><rect x="4.100" y=".2" width="1.300" height="6.500" rx=".65"/><rect x="5.700" y=".7" width="1.300" height="6" rx=".65"/><rect x="7.300" y="2" width="1.250" height="5" rx=".62"/><path d="M2.500 5h6.050v2.200c0 1.800-1.200 3-3 3-1.300 0-2.200-.6-2.900-1.800L.5 5.500c-.5-.8.600-1.500 1.200-.7l.8 1.200z"/></g></svg>
<svg style="left:21.7px;top:322.2px" width="2.400" height="2.400" viewBox="0 0 2.400 2.400"><path d="M2.400 0v2.400H0z" fill="#cfcfcf"/></svg>
<svg style="left:10.300px;top:331.200px" width="10" height="10" viewBox="0 0 10 10"><circle cx="3.500" cy="3.500" r="3" fill="none" stroke="#e2e2e2" stroke-width=".9"/><path d="M5.800 5.700l3.700 3.700" stroke="#e2e2e2" stroke-width="1.200" stroke-linecap="round"/></svg>
<div class="a" style="left:10.4px;top:354px;width:2px;height:2px;background:#e2e2e2;border-radius:50%"></div>
<div class="a" style="left:14.3px;top:354px;width:2px;height:2px;background:#e2e2e2;border-radius:50%"></div>
<div class="a" style="left:18.1px;top:354px;width:2px;height:2px;background:#e2e2e2;border-radius:50%"></div>
<svg style="left:5.200px;top:366.700px" width="7.800" height="7.600" viewBox="0 0 7.800 7.600"><rect x="2.600" y="2.500" width="4.800" height="4.700" fill="#222" stroke="#ddd" stroke-width=".8"/><rect x=".4" y=".4" width="4.800" height="4.700" fill="#ddd" stroke="#ddd" stroke-width=".8"/><rect x="1.300" y="1.300" width="3" height="2.900" fill="#555"/></svg>
<svg style="left:17.200px;top:367.500px" width="7.500" height="7" viewBox="0 0 7.500 7"><path d="M1.800 1.800h1.800c1.300 0 2 .7 2 2v1.300" fill="none" stroke="#ddd" stroke-width="1"/><path d="M2.300 0v3.600L0 1.800zM3.800 4.700h3.600L5.600 7z" fill="#ddd"/></svg>
<div class="a" style="left:12.2px;top:385px;width:12.8px;height:12.5px;background:#1e1e1e;border:.8px solid #dadada"></div>
<div class="a" style="left:14.5px;top:387.3px;width:8.2px;height:7.9px;background:#323232;border:.8px solid #dadada"></div>
<div class="a" style="left:5.9px;top:378.4px;width:12.1px;height:12.2px;background:#04cb03;border:.8px solid #e8f5e8"></div>
<svg style="left:13px;top:404.500px" width="5.500" height="9.500" viewBox="0 0 5.500 9.500"><path d="M4.800.3C2.500.8.800 2 1.200 3.500c.5 1.700 3.500 1.800 3.600 3.500.1 1.300-1.800 2-4.300 2.200" fill="none" stroke="#3d3d3d" stroke-width=".8"/></svg>
<svg style="left:13px;top:423px" width="5.500" height="9.500" viewBox="0 0 5.500 9.500"><path d="M.8.300v2.500c0 1 .5 1.500 1.500 1.500h2.200V9" fill="none" stroke="#3d3d3d" stroke-width=".8"/></svg>
</body></html>
